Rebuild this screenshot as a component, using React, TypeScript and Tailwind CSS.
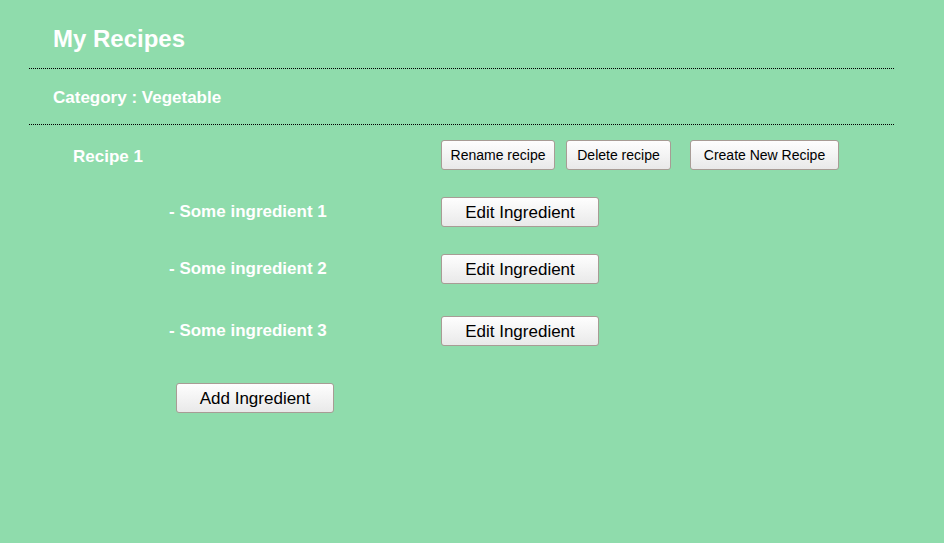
import React from 'react';

const btn =
  'h-[30px] pt-px rounded-[3px] border border-[#a89c95] bg-gradient-to-b from-[#fefefe] to-[#e9e9e9] text-black flex items-center justify-center';

interface IngredientRowProps {
  name: string;
  className?: string;
}

const IngredientRow: React.FC<IngredientRowProps> = ({ name, className }) => {
  return (
    <div className={`flex items-center pl-[140px] ${className ?? ''}`}>
      <span className="w-[272px] text-[17px] font-bold text-white leading-5">- {name}</span>
      <button className={`${btn} w-[158px] text-[17px]`}>Edit Ingredient</button>
    </div>
  );
};

const App: React.FC = () => {
  const ingredients = [
    { name: 'Some ingredient 1', className: 'mt-[27px]' },
    { name: 'Some ingredient 2', className: 'mt-[27px]' },
    { name: 'Some ingredient 3', className: 'mt-[32px]' },
  ];

  return (
    <div className="w-[944px] h-[543px] bg-[#8fdcac] font-['Liberation_Sans',Arial,sans-serif] overflow-hidden">
      <div className="ml-[29px] w-[865px] pt-[25px]">
        <h1 className="pl-[24px] h-[28px] leading-[28px] text-[24px] font-bold text-white">My Recipes</h1>
        <div className="mt-[15px] border-t border-dotted border-black"></div>

        <h2 className="mt-[19px] pl-[24px] h-[20px] leading-5 text-[17px] font-bold text-white">
          Category : Vegetable
        </h2>
        <div className="mt-[16px] border-t border-dotted border-black"></div>

        {/* recipe row */}
        <div className="mt-[15px] flex items-center pl-[44px]">
          <span className="w-[368px] text-[17px] font-bold text-white leading-5 pt-[4px]">Recipe 1</span>
          <button className={`${btn} w-[114px] text-[14px]`}>Rename recipe</button>
          <button className={`${btn} ml-[11px] w-[105px] text-[14px]`}>Delete recipe</button>
          <button className={`${btn} ml-[19px] w-[149px] text-[14px]`}>Create New Recipe</button>
        </div>

        {ingredients.map((ing, index) => (
          <IngredientRow key={index} name={ing.name} className={ing.className} />
        ))}

        <div className="mt-[37px] pl-[147px]">
          <button className={`${btn} w-[158px] text-[17px]`}>Add Ingredient</button>
        </div>
      </div>
    </div>
  );
};

export default App;
